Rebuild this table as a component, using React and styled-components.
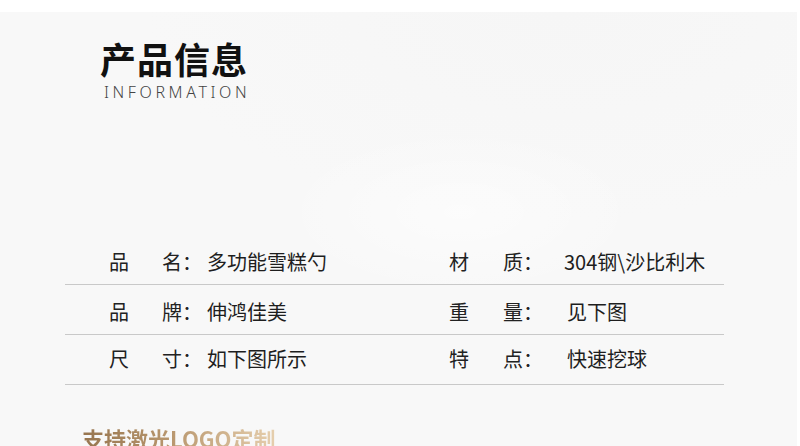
import React from "react";
import styled, { createGlobalStyle } from "styled-components";

const Global = createGlobalStyle`
  html, body { margin: 0; padding: 0; background: #ffffff; }
  body { font-family: "Noto Sans CJK SC", "Noto Sans", sans-serif; }
  * { box-sizing: border-box; }
`;

const Page = styled.div`
  width: 800px;
  height: 446px;
  overflow: hidden;
  background: #ffffff;
  padding-top: 12px;
`;

const Panel = styled.section`
  width: 797px;
  height: 434px;
  background:
    radial-gradient(ellipse 260px 120px at 460px 200px, rgba(255,255,255,0.55), rgba(255,255,255,0) 70%),
    radial-gradient(ellipse 520px 260px at 560px 0px, rgba(246,246,246,1), rgba(246,246,246,0) 80%),
    #f8f8f8;
  display: flex;
  flex-direction: column;
`;

const Header = styled.header`
  padding: 21px 0 0 100px;
  display: flex;
  flex-direction: column;
  align-items: flex-start;
`;

const Title = styled.h1`
  margin: 0;
  font-family: "Noto Sans CJK SC", sans-serif;
  font-weight: 700;
  font-size: 36px;
  line-height: 50px;
  color: #111111;
  letter-spacing: 1px;
`;

const Subtitle = styled.div`
  padding-left: 4px;
  font-family: "Noto Sans", "Noto Sans CJK SC", sans-serif;
  font-weight: 300;
  font-size: 16px;
  line-height: 18px;
  letter-spacing: 3.6px;
  color: #444444;
`;

const Table = styled.div`
  margin: 134px 0 0 65px;
  width: 659px;
  display: flex;
  flex-direction: column;
`;

const Row = styled.div`
  height: 50px;
  border-bottom: 1px solid #c9c9c9;
  display: grid;
  grid-template-columns: 53px 45px 242px 54px ${(p) => p.$gap}px 1fr;
  align-items: end;
  padding: 0 0 ${(p) => p.$pb}px 44px;
  font-family: "Noto Sans CJK SC", sans-serif;
  font-size: 20px;
  line-height: 24px;
  color: #222222;
`;

const Label = styled.span`
  color: #222222;
`;

const Value = styled.span`
  color: #1e1e1e;
  white-space: nowrap;
`;

const Promo = styled.div`
  margin: 40px 0 0 82px;
  font-family: "Noto Sans CJK SC", sans-serif;
  font-weight: 700;
  font-size: 22px;
  line-height: 26px;
  background: linear-gradient(90deg, #97754f 0%, #b8966d 45%, #e6cfae 100%);
  -webkit-background-clip: text;
  background-clip: text;
  color: transparent;
  width: max-content;
`;

const rows = [
  { a: ["品", "名：", "多功能雪糕勺"], b: ["材", "质：", "304钢\\沙比利木"], gap: 61, pb: 10 },
  { a: ["品", "牌：", "伸鸿佳美"], b: ["重", "量：", "见下图"], gap: 64, pb: 10 },
  { a: ["尺", "寸：", "如下图所示"], b: ["特", "点：", "快速挖球"], gap: 64, pb: 13 },
];

export default function App() {
  return (
    <>
      <Global />
      <Page>
        <Panel>
          <Header>
            <Title>产品信息</Title>
            <Subtitle>INFORMATION</Subtitle>
          </Header>
          <Table>
            {rows.map((r, i) => (
              <Row key={i} $gap={r.gap} $pb={r.pb}>
                <Label>{r.a[0]}</Label>
                <Label>{r.a[1]}</Label>
                <Value>{r.a[2]}</Value>
                <Label>{r.b[0]}</Label>
                <Label>{r.b[1]}</Label>
                <Value>{r.b[2]}</Value>
              </Row>
            ))}
          </Table>
          <Promo>支持激光LOGO定制</Promo>
        </Panel>
      </Page>
    </>
  );
}
